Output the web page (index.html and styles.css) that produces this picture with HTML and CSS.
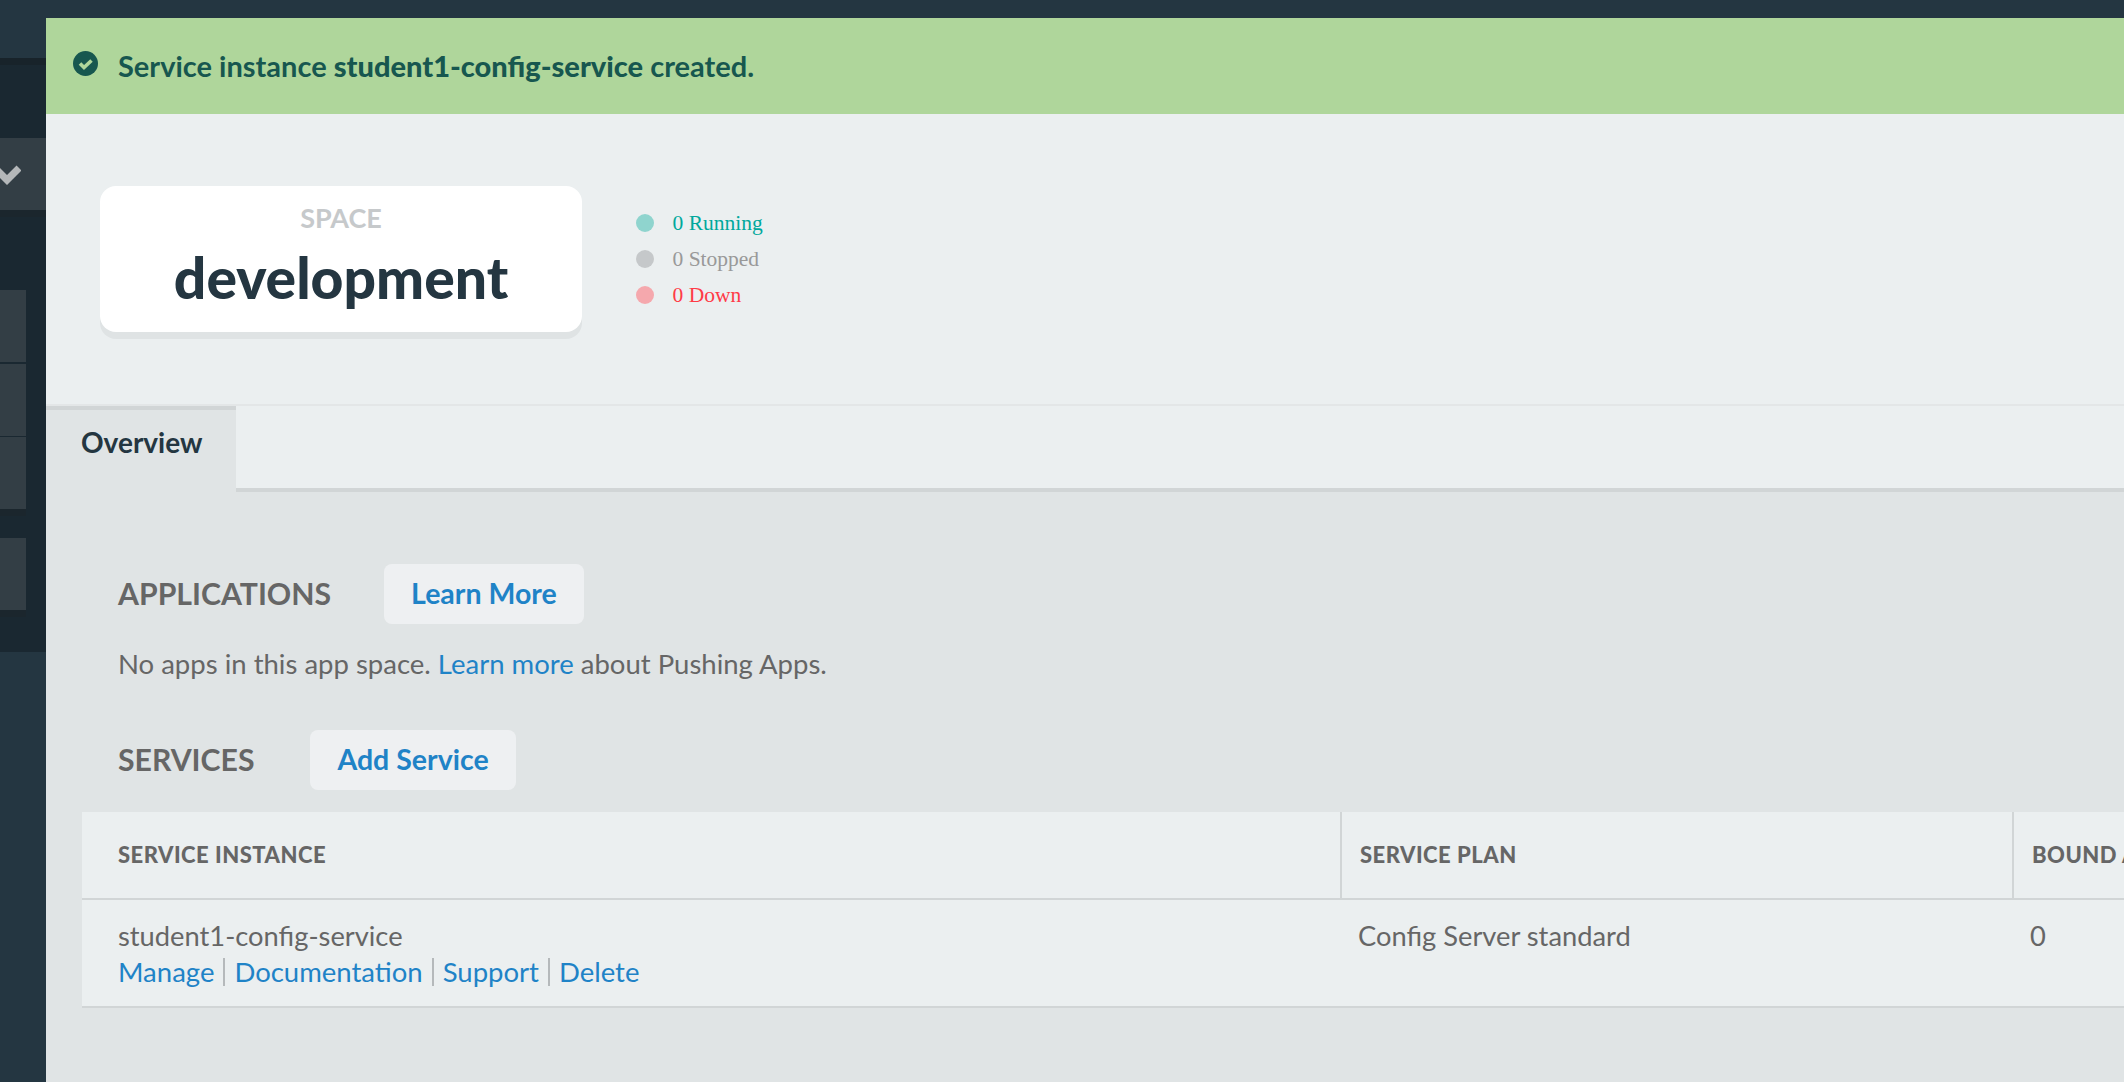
FILE: index.html
```html
<!DOCTYPE html>
<html lang="en">
<head>
    <meta charset="UTF-8">
    <title>development - Space</title>
    <link rel="stylesheet" href="styles.css">
</head>
<body>
    <div class="app">
        <!-- Sidebar, mostly off screen -->
        <aside class="sidebar">
            <div class="sidebar-top"></div>
            <div class="sidebar-dark">
                <div class="org-select">
                    <svg class="chevron" width="32" height="24" viewBox="0 0 32 24"><path d="M6 5 L18 17 L30 5" fill="none" stroke="#b4b7b9" stroke-width="7"/></svg>
                </div>
                <ul class="side-list">
                    <li></li>
                    <li></li>
                    <li class="last"></li>
                </ul>
                <ul class="side-list side-list-2">
                    <li class="last"></li>
                </ul>
            </div>
        </aside>

        <div class="page">
            <div class="topbar"></div>

            <div class="flash">
                <svg class="flash-icon" width="25" height="25" viewBox="0 0 25 25">
                    <circle cx="12.5" cy="12.5" r="12.5" fill="#17574f"/>
                    <path d="M7 12.5 L11 16.5 L18.5 9.5" fill="none" stroke="#afd69b" stroke-width="3.6"/>
                </svg>
                <p>Service instance <strong>student1-config-service</strong> created.</p>
            </div>

            <header class="space-header">
                <div class="space-card">
                    <div class="space-label">SPACE</div>
                    <h1>development</h1>
                </div>
                <ul class="status">
                    <li class="running"><span class="dot"></span>0 Running</li>
                    <li class="stopped"><span class="dot"></span>0 Stopped</li>
                    <li class="down"><span class="dot"></span>0 Down</li>
                </ul>
            </header>

            <nav class="tabs">
                <a class="tab" href="#">Overview</a>
                <div class="tab-rest"></div>
            </nav>

            <main class="content">
                <div class="section-head head-apps">
                    <h2>APPLICATIONS</h2>
                    <a class="btn" href="#">Learn More</a>
                </div>
                <p class="empty">No apps in this app space. <a href="#">Learn more</a> about Pushing Apps.</p>

                <div class="section-head head-services">
                    <h2>SERVICES</h2>
                    <a class="btn" href="#">Add Service</a>
                </div>

                <table class="services">
                    <thead>
                        <tr>
                            <th class="col-instance">SERVICE INSTANCE</th>
                            <th class="col-plan">SERVICE PLAN</th>
                            <th class="col-bound">BOUND APPS</th>
                        </tr>
                    </thead>
                    <tbody>
                        <tr>
                            <td class="col-instance">
                                student1-config-service
                                <div class="links">
                                    <a href="#">Manage</a><a href="#">Documentation</a><a href="#">Support</a><a href="#">Delete</a>
                                </div>
                            </td>
                            <td class="col-plan">Config Server standard</td>
                            <td class="col-bound">0</td>
                        </tr>
                    </tbody>
                </table>
            </main>
        </div>
    </div>
</body>
</html>
```

FILE: styles.css
```css
/* Global */
html, body {
    height: 100%;
    margin: 0;
    overflow: hidden;
}

body {
    font-family: Lato, "Open Sans", sans-serif;
    color: #666;
    background-color: #e0e4e5;
}

a {
    color: #1f83c7;
    text-decoration: none;
}

ul {
    list-style: none;
    margin: 0;
    padding: 0;
}

.app {
    display: flex;
    height: 100%;
}

/* Sidebar */
.sidebar {
    flex: 0 0 46px;
    display: flex;
    flex-direction: column;
    overflow: hidden;
    background-color: #243641;
}

.sidebar-top {
    height: 58px;
}

.sidebar-dark {
    height: 594px;
    padding-top: 7px;
    box-sizing: border-box;
    background-color: #1a2831;
    border-top: 7px solid #18232a;
}

.org-select {
    display: flex;
    justify-content: flex-end;
    align-items: center;
    height: 72px;
    margin-top: 66px;
    background-color: #333e45;
    box-shadow: 0 7px 0 #1b262d;
}

.chevron {
    flex: none;
    margin-right: 25px;
    margin-top: 2px;
}

.side-list {
    width: 26px;
    margin-top: 80px;
}

.side-list li {
    height: 72px;
    margin-bottom: 1px;
    background-color: #333e45;
}

.side-list li:first-child {
    margin-bottom: 2px;
}

.side-list li.last {
    margin-bottom: 0;
    box-shadow: 0 7px 0 #1b262d;
}

.side-list-2 {
    margin-top: 29px;
}

/* Main column */
.page {
    flex: 1;
    min-width: 0;
    display: flex;
    flex-direction: column;
    overflow: hidden;
}

.topbar {
    flex: 0 0 18px;
    background-color: #243641;
}

.flash {
    flex: 0 0 96px;
    display: flex;
    align-items: center;
    padding-left: 27px;
    background-color: #afd69b;
    color: #17574f;
    font-size: 29px;
    font-weight: 700;
}

.flash p {
    margin: -2px 0 0 20px;
}

.flash-icon {
    margin-top: -6px;
}

/* Space header */
.space-header {
    flex: 0 0 292px;
    box-sizing: border-box;
    display: flex;
    align-items: flex-start;
    padding: 72px 0 0 54px;
    background-color: #ebeff0;
    border-bottom: 2px solid #e3e6e7;
}

.space-card {
    width: 482px;
    height: 146px;
    text-align: center;
    background-color: white;
    border-radius: 16px;
    box-shadow: 0 7px 0 #dfe3e4;
}

.space-label {
    margin-top: 16px;
    font-size: 27px;
    line-height: 32px;
    font-weight: 700;
    color: #c6c9cb;
}

.space-card h1 {
    margin: 11px 0 0;
    font-size: 57px;
    line-height: 64px;
    font-weight: 900;
    color: #243641;
}

.status {
    margin: 19px 0 0 54px;
    font-family: "Liberation Serif", serif;
    font-size: 21.5px;
}

.status li {
    display: flex;
    align-items: center;
    height: 36px;
}

.dot {
    width: 18px;
    height: 18px;
    margin-right: 18.5px;
    border-radius: 50%;
}

.running { color: #00a89c; }
.running .dot { background-color: #8fd4ce; }
.stopped { color: #999; }
.stopped .dot { background-color: #c5c8ca; }
.down { color: #ff3b47; }
.down .dot { background-color: #f5a8ad; }

/* Tabs */
.tabs {
    flex: 0 0 86px;
    display: flex;
    background-color: #ebeff0;
}

.tab {
    flex: 0 0 190px;
    box-sizing: border-box;
    padding: 15px 0 0 35px;
    font-size: 28px;
    line-height: 34px;
    font-weight: 700;
    color: #243641;
    background-color: #e0e4e5;
    border-top: 4px solid #d1d5d6;
}

.tab-rest {
    flex: 1;
    border-bottom: 4px solid #d1d5d6;
}

/* Content */
.content {
    flex: 1;
    padding: 72px 0 0 36px;
    background-color: #e0e4e5;
}

.section-head {
    display: flex;
    align-items: center;
    margin-left: 36px;
}

.section-head h2 {
    margin: 0;
    padding-bottom: 2px;
    font-size: 30.2px;
    font-weight: 700;
    line-height: 58px;
}

.head-apps h2 { margin-right: 53px; }
.head-services h2 { margin-right: 56px; }

.btn {
    display: block;
    padding: 0 27px 2px;
    font-size: 28.5px;
    font-weight: 700;
    line-height: 58px;
    background-color: #eef0f2;
    border-radius: 8px;
}

.empty {
    margin: 22px 0 0 36px;
    font-size: 27.5px;
    line-height: 36px;
}

.head-services {
    margin-top: 48px;
}

/* Table */
.services {
    width: 2042px;
    margin-top: 22px;
    table-layout: fixed;
    border-collapse: collapse;
    background-color: #ebeff0;
    border-bottom: 2px solid #d1d5d6;
}

.services th {
    height: 87px;
    padding: 0 0 2px;
    box-sizing: border-box;
    font-size: 22px;
    font-weight: 900;
    letter-spacing: 0.5px;
    text-align: left;
    white-space: nowrap;
    border-bottom: 2px solid #d1d5d6;
    border-left: 2px solid #d1d5d6;
}

.services td {
    padding: 18px 0 16px;
    font-size: 27.3px;
    line-height: 36px;
    vertical-align: top;
}

.col-instance {
    width: 1259px;
}

.services th.col-instance {
    padding-left: 36px;
    border-left: none;
}

.services td.col-instance {
    padding-left: 36px;
}

.col-plan {
    width: 672px;
}

.services th.col-plan, .services th.col-bound {
    padding-left: 18px;
}

.services td.col-plan, .services td.col-bound {
    padding-left: 17px;
}

.links a {
    display: inline-block;
    font-size: 27.5px;
    line-height: 28px;
    padding-right: 9px;
    margin-right: 9px;
    border-right: 2px solid #b5b9bb;
}

.links a:last-child {
    border-right: none;
}
```
